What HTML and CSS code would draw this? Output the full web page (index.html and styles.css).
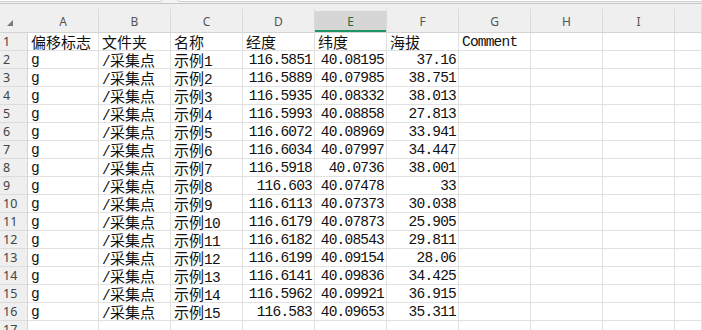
FILE: index.html
```html
<!DOCTYPE html>
<html lang="zh-CN">
<head>
<meta charset="utf-8">
<title>Sheet</title>
<link rel="stylesheet" href="styles.css">
</head>
<body>
<div class="topbar">
  <div class="namebox"></div>
  <div class="formulabar"></div>
</div>
<div class="sheet">
  <div class="corner"><svg width="6" height="6" viewBox="0 0 6 6"><polygon points="6,0 6,6 0,6" fill="#7b7b7b"/></svg></div>
  <div class="colhead">A</div>
  <div class="colhead">B</div>
  <div class="colhead">C</div>
  <div class="colhead">D</div>
  <div class="colhead sel">E</div>
  <div class="colhead">F</div>
  <div class="colhead">G</div>
  <div class="colhead">H</div>
  <div class="colhead">I</div>
  <div class="colhead"></div>

  <div class="rowhead">1</div>
  <div class="cell"><span class="zh">偏移标志</span></div>
  <div class="cell"><span class="zh">文件夹</span></div>
  <div class="cell"><span class="zh">名称</span></div>
  <div class="cell"><span class="zh">经度</span></div>
  <div class="cell"><span class="zh">纬度</span></div>
  <div class="cell"><span class="zh">海拔</span></div>
  <div class="cell">Comment</div>
  <div class="cell"></div><div class="cell"></div><div class="cell"></div>

  <div class="rowhead">2</div>
  <div class="cell">g</div><div class="cell">/<span class="zh">采集点</span></div><div class="cell"><span class="zh">示例</span>1</div>
  <div class="cell num">116.5851</div><div class="cell num">40.08195</div><div class="cell num">37.16</div>
  <div class="cell"></div><div class="cell"></div><div class="cell"></div><div class="cell"></div>

  <div class="rowhead">3</div>
  <div class="cell">g</div><div class="cell">/<span class="zh">采集点</span></div><div class="cell"><span class="zh">示例</span>2</div>
  <div class="cell num">116.5889</div><div class="cell num">40.07985</div><div class="cell num">38.751</div>
  <div class="cell"></div><div class="cell"></div><div class="cell"></div><div class="cell"></div>

  <div class="rowhead">4</div>
  <div class="cell">g</div><div class="cell">/<span class="zh">采集点</span></div><div class="cell"><span class="zh">示例</span>3</div>
  <div class="cell num">116.5935</div><div class="cell num">40.08332</div><div class="cell num">38.013</div>
  <div class="cell"></div><div class="cell"></div><div class="cell"></div><div class="cell"></div>

  <div class="rowhead">5</div>
  <div class="cell">g</div><div class="cell">/<span class="zh">采集点</span></div><div class="cell"><span class="zh">示例</span>4</div>
  <div class="cell num">116.5993</div><div class="cell num">40.08858</div><div class="cell num">27.813</div>
  <div class="cell"></div><div class="cell"></div><div class="cell"></div><div class="cell"></div>

  <div class="rowhead">6</div>
  <div class="cell">g</div><div class="cell">/<span class="zh">采集点</span></div><div class="cell"><span class="zh">示例</span>5</div>
  <div class="cell num">116.6072</div><div class="cell num">40.08969</div><div class="cell num">33.941</div>
  <div class="cell"></div><div class="cell"></div><div class="cell"></div><div class="cell"></div>

  <div class="rowhead">7</div>
  <div class="cell">g</div><div class="cell">/<span class="zh">采集点</span></div><div class="cell"><span class="zh">示例</span>6</div>
  <div class="cell num">116.6034</div><div class="cell num">40.07997</div><div class="cell num">34.447</div>
  <div class="cell"></div><div class="cell"></div><div class="cell"></div><div class="cell"></div>

  <div class="rowhead">8</div>
  <div class="cell">g</div><div class="cell">/<span class="zh">采集点</span></div><div class="cell"><span class="zh">示例</span>7</div>
  <div class="cell num">116.5918</div><div class="cell num">40.0736</div><div class="cell num">38.001</div>
  <div class="cell"></div><div class="cell"></div><div class="cell"></div><div class="cell"></div>

  <div class="rowhead">9</div>
  <div class="cell">g</div><div class="cell">/<span class="zh">采集点</span></div><div class="cell"><span class="zh">示例</span>8</div>
  <div class="cell num">116.603</div><div class="cell num">40.07478</div><div class="cell num">33</div>
  <div class="cell"></div><div class="cell"></div><div class="cell"></div><div class="cell"></div>

  <div class="rowhead">10</div>
  <div class="cell">g</div><div class="cell">/<span class="zh">采集点</span></div><div class="cell"><span class="zh">示例</span>9</div>
  <div class="cell num">116.6113</div><div class="cell num">40.07373</div><div class="cell num">30.038</div>
  <div class="cell"></div><div class="cell"></div><div class="cell"></div><div class="cell"></div>

  <div class="rowhead">11</div>
  <div class="cell">g</div><div class="cell">/<span class="zh">采集点</span></div><div class="cell"><span class="zh">示例</span>10</div>
  <div class="cell num">116.6179</div><div class="cell num">40.07873</div><div class="cell num">25.905</div>
  <div class="cell"></div><div class="cell"></div><div class="cell"></div><div class="cell"></div>

  <div class="rowhead">12</div>
  <div class="cell">g</div><div class="cell">/<span class="zh">采集点</span></div><div class="cell"><span class="zh">示例</span>11</div>
  <div class="cell num">116.6182</div><div class="cell num">40.08543</div><div class="cell num">29.811</div>
  <div class="cell"></div><div class="cell"></div><div class="cell"></div><div class="cell"></div>

  <div class="rowhead">13</div>
  <div class="cell">g</div><div class="cell">/<span class="zh">采集点</span></div><div class="cell"><span class="zh">示例</span>12</div>
  <div class="cell num">116.6199</div><div class="cell num">40.09154</div><div class="cell num">28.06</div>
  <div class="cell"></div><div class="cell"></div><div class="cell"></div><div class="cell"></div>

  <div class="rowhead">14</div>
  <div class="cell">g</div><div class="cell">/<span class="zh">采集点</span></div><div class="cell"><span class="zh">示例</span>13</div>
  <div class="cell num">116.6141</div><div class="cell num">40.09836</div><div class="cell num">34.425</div>
  <div class="cell"></div><div class="cell"></div><div class="cell"></div><div class="cell"></div>

  <div class="rowhead">15</div>
  <div class="cell">g</div><div class="cell">/<span class="zh">采集点</span></div><div class="cell"><span class="zh">示例</span>14</div>
  <div class="cell num">116.5962</div><div class="cell num">40.09921</div><div class="cell num">36.915</div>
  <div class="cell"></div><div class="cell"></div><div class="cell"></div><div class="cell"></div>

  <div class="rowhead">16</div>
  <div class="cell">g</div><div class="cell">/<span class="zh">采集点</span></div><div class="cell"><span class="zh">示例</span>15</div>
  <div class="cell num">116.583</div><div class="cell num">40.09653</div><div class="cell num">35.311</div>
  <div class="cell"></div><div class="cell"></div><div class="cell"></div><div class="cell"></div>

  <div class="rowhead">17</div>
  <div class="cell"></div><div class="cell"></div><div class="cell"></div>
  <div class="cell"></div><div class="cell"></div><div class="cell"></div>
  <div class="cell"></div><div class="cell"></div><div class="cell"></div><div class="cell"></div>
</div>
</body>
</html>
```

FILE: styles.css
```css
html, body {
  margin: 0;
  padding: 0;
}
body {
  width: 702px;
  height: 330px;
  overflow: hidden;
  background: #f3f3f3;
}
.topbar {
  height: 3px;
  display: flex;
  gap: 10px;
  overflow: hidden;
  border-bottom: 1px solid #c6c6c6;
  background: #f3f3f3;
}
.namebox, .formulabar {
  margin-top: -20px;
  height: 22px;
  box-sizing: border-box;
  background: #fff;
  border: 1px solid #cfcfcf;
  border-radius: 6px;
}
.namebox {
  width: 171px;
  margin-left: -6px;
  flex: none;
}
.formulabar {
  flex: 1;
  margin-right: -8px;
}
.sheet {
  display: grid;
  grid-template-columns: 28px 71px repeat(8, 72px) 1fr;
  grid-template-rows: 29px;
  grid-auto-rows: 18px;
  background: #fff;
}
.corner {
  background: #efefef;
  border-bottom: 1px solid #d4d4d4;
  display: flex;
  align-items: flex-start;
  padding: 16px 0 0 7px;
  box-sizing: border-box;
}
.corner svg {
  display: block;
}
.colhead {
  border-top: 7px solid #efefef;
  background: #efefef;
  border-right: 1px solid #dadada;
  border-bottom: 1px solid #d4d4d4;
  box-sizing: border-box;
  font-family: "Noto Sans", "Liberation Sans", sans-serif;
  font-size: 12px;
  line-height: 21px;
  color: #555;
  text-align: center;
}
.colhead.sel {
  background: #d6d6d6;
  color: #1c6b44;
  box-shadow: inset 0 -2px 0 #1e9464;
}
.rowhead {
  background: #efefef;
  border-right: 1px solid #d4d4d4;
  border-bottom: 1px solid #dcdcdc;
  box-sizing: border-box;
  font-family: "Noto Sans", "Liberation Sans", sans-serif;
  font-size: 12.5px;
  line-height: 17px;
  color: #444;
  padding-left: 3px;
}
.cell {
  border-right: 1px solid #e1e1e1;
  border-bottom: 1px solid #e1e1e1;
  box-sizing: border-box;
  padding: 0 3px;
  font-family: "Liberation Mono", "Noto Sans CJK SC", monospace;
  font-size: 14.5px;
  letter-spacing: -0.8px;
  line-height: 18px;
  color: #111;
  white-space: nowrap;
  overflow: hidden;
}
.cell.num {
  text-align: right;
  padding-right: 2px;
}
.zh {
  font-family: "Noto Sans CJK SC", sans-serif;
  font-size: 15px;
  letter-spacing: 0;
}
```
